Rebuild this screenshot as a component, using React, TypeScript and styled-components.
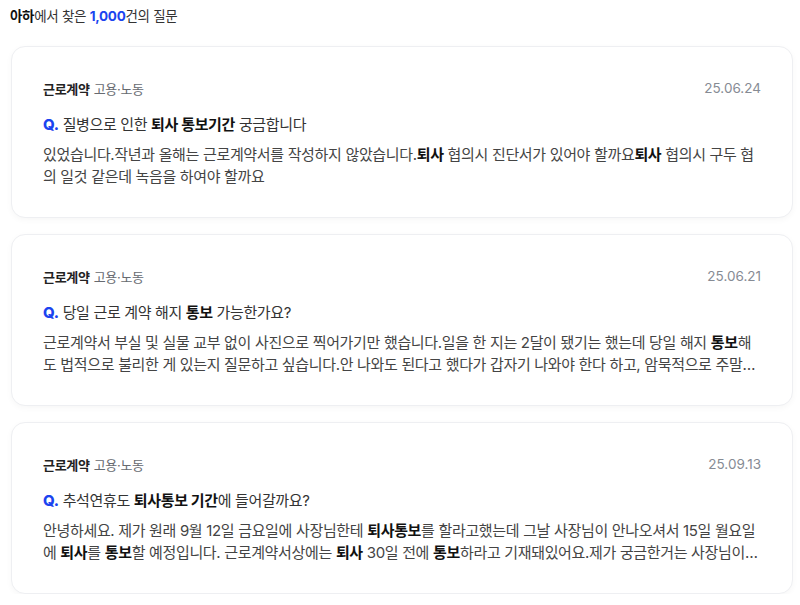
import React from "react";
import styled, { createGlobalStyle } from "styled-components";

const Global = createGlobalStyle`
  html, body { margin: 0; padding: 0; background: #ffffff; }
  body {
    font-family: Inter, "Noto Sans CJK KR", "Noto Sans", sans-serif;
    -webkit-font-smoothing: antialiased;
  }
`;

const Page = styled.div`
  padding: 6px 7px 0 11px;
  display: flex;
  flex-direction: column;
`;

const Heading = styled.div`
  font-size: 13.5px;
  line-height: 20px;
  color: #333;
  margin-left: -1px;
  margin-bottom: 20px;
  letter-spacing: -0.3px;
`;

const Brand = styled.strong`
  font-weight: 700;
  color: #111;
`;

const Count = styled.strong`
  font-weight: 700;
  color: #1b44ef;
`;

const List = styled.div`
  display: flex;
  flex-direction: column;
  gap: 16px;
`;

const Card = styled.article`
  background: #fff;
  border: 1px solid #eeeff2;
  border-radius: 14px;
  box-shadow: 0 2px 6px rgba(0, 0, 0, 0.035);
  padding: 31px 31px 30px 31px;
  display: flex;
  flex-direction: column;
`;

const Meta = styled.div`
  display: flex;
  justify-content: space-between;
  align-items: center;
  height: 20px;
  margin-bottom: 16px;
`;

const Category = styled.div`
  font-size: 13px;
  color: #666a70;
  letter-spacing: -0.3px;
`;

const CategoryMain = styled.span`
  font-weight: 700;
  color: #222;
  margin-right: 4px;
`;

const DateText = styled.span`
  font-size: 13.5px;
  color: #868b94;
`;

const Title = styled.h3`
  margin: 0 0 8px;
  font-size: 15px;
  line-height: 22px;
  font-weight: 400;
  color: #333;
  letter-spacing: -0.35px;
`;

const Q = styled.span`
  font-weight: 800;
  color: #1b44ef;
  margin-right: 4px;
`;

const Body = styled.p`
  margin: 0;
  font-size: 15px;
  line-height: 21.5px;
  color: #444;
  word-break: break-all;
  letter-spacing: -0.33px;
  display: -webkit-box;
  -webkit-line-clamp: 2;
  -webkit-box-orient: vertical;
  overflow: hidden;
`;

const Hl = styled.b`
  font-weight: 700;
  color: #111;
`;

type Seg = string | { b: string };

const render = (segs: Seg[]) =>
  segs.map((s, i) => (typeof s === "string" ? <React.Fragment key={i}>{s}</React.Fragment> : <Hl key={i}>{s.b}</Hl>));

const items: { date: string; title: Seg[]; body: Seg[] }[] = [
  {
    date: "25.06.24",
    title: ["질병으로 인한 ", { b: "퇴사 통보기간" }, " 궁금합니다"],
    body: [
      "있었습니다.작년과 올해는 근로계약서를 작성하지 않았습니다.",
      { b: "퇴사" },
      " 협의시 진단서가 있어야 할까요",
      { b: "퇴사" },
      " 협의시 구두 협의 일것 같은데 녹음을 하여야 할까요",
    ],
  },
  {
    date: "25.06.21",
    title: ["당일 근로 계약 해지 ", { b: "통보" }, " 가능한가요?"],
    body: [
      "근로계약서 부실 및 실물 교부 없이 사진으로 찍어가기만 했습니다.일을 한 지는 2달이 됐기는 했는데 당일 해지 ",
      { b: "통보" },
      "해도 법적으로 불리한 게 있는지 질문하고 싶습니다.안 나와도 된다고 했다가 갑자기 나와야 한다 하고, 암묵적으로 주말에도 나오라고 해서 계속 일했습니다.",
    ],
  },
  {
    date: "25.09.13",
    title: ["추석연휴도 ", { b: "퇴사통보 기간" }, "에 들어갈까요?"],
    body: [
      "안녕하세요. 제가 원래 9월 12일 금요일에 사장님한테 ",
      { b: "퇴사통보" },
      "를 할라고했는데 그날 사장님이 안나오셔서 15일 월요일에 ",
      { b: "퇴사" },
      "를 ",
      { b: "통보" },
      "할 예정입니다. 근로계약서상에는 ",
      { b: "퇴사" },
      " 30일 전에 ",
      { b: "통보" },
      "하라고 기재돼있어요.제가 궁금한거는 사장님이 추석연휴를 포함해서 계산하는지입니다.",
    ],
  },
];

export default function App() {
  return (
    <>
      <Global />
      <Page>
        <Heading>
          <Brand>아하</Brand>에서 찾은 <Count>1,000</Count>건의 질문
        </Heading>
        <List>
          {items.map((it) => (
            <Card key={it.date}>
              <Meta>
                <Category>
                  <CategoryMain>근로계약</CategoryMain>고용·노동
                </Category>
                <DateText>{it.date}</DateText>
              </Meta>
              <Title>
                <Q>Q.</Q>
                {render(it.title)}
              </Title>
              <Body>{render(it.body)}</Body>
            </Card>
          ))}
        </List>
      </Page>
    </>
  );
}
